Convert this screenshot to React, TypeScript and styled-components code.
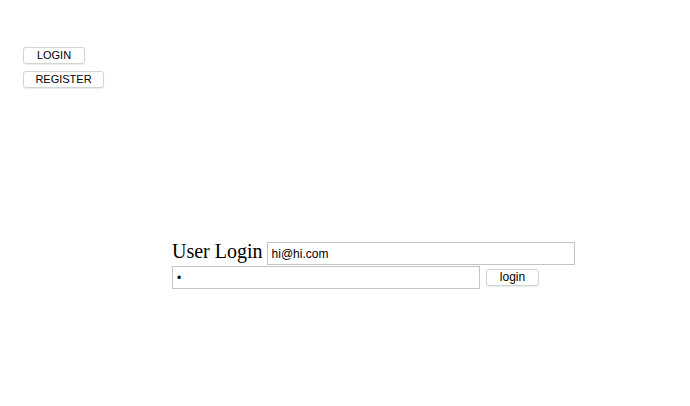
import React from "react";
import styled, { createGlobalStyle } from "styled-components";

const Global = createGlobalStyle`
  html, body { margin: 0; padding: 0; background: #fff; }
  body { font-family: "Liberation Serif", serif; }
`;

const Page = styled.div`
  width: 690px;
  height: 406px;
  display: flex;
  flex-direction: column;
`;

const Nav = styled.nav`
  display: flex;
  flex-direction: column;
  align-items: flex-start;
  gap: 7px;
  padding: 47px 0 0 23px;
`;

const NavButton = styled.button<{ $w: number }>`
  width: ${(p) => p.$w}px;
  height: 17px;
  padding: 0;
  background: #fff;
  border: 1px solid #d4d4d4;
  border-radius: 3px;
  font-family: "Liberation Sans", Arial, sans-serif;
  font-size: 11px;
  color: #000;
  line-height: 15px;
  box-shadow: 0 1px 1px rgba(0, 0, 0, 0.08);
`;

const Form = styled.form`
  margin: 154px 0 0 172px;
  display: flex;
  flex-direction: column;
  align-items: flex-start;
  gap: 1px;
`;

const Row = styled.div<{ $gap: number }>`
  display: flex;
  align-items: center;
  gap: ${(p) => p.$gap}px;
`;

const Title = styled.span`
  font-family: "Liberation Serif", "Times New Roman", serif;
  font-size: 20px;
  color: #000;
  line-height: 23px;
  position: relative;
  top: -2px;
`;

const Input = styled.input`
  box-sizing: border-box;
  width: 308px;
  height: 23px;
  margin: 0;
  padding: 0 4px;
  border: 1px solid #c4c4c4;
  font-family: "Liberation Sans", Arial, sans-serif;
  font-size: 12px;
  color: #000;
  outline: none;
`;

const SubmitButton = styled.button`
  width: 53px;
  height: 17px;
  padding: 0;
  background: #fff;
  border: 1px solid #d4d4d4;
  border-radius: 3px;
  font-family: "Liberation Sans", Arial, sans-serif;
  font-size: 12px;
  color: #000;
  line-height: 15px;
  box-shadow: 0 1px 1px rgba(0, 0, 0, 0.08);
`;

export default function App() {
  return (
    <Page>
      <Global />
      <Nav>
        <NavButton $w={62}>LOGIN</NavButton>
        <NavButton $w={81}>REGISTER</NavButton>
      </Nav>
      <Form onSubmit={(e) => e.preventDefault()}>
        <Row $gap={4}>
          <Title>User Login</Title>
          <Input type="text" defaultValue="hi@hi.com" />
        </Row>
        <Row $gap={6}>
          <Input type="password" defaultValue="a" />
          <SubmitButton type="submit">login</SubmitButton>
        </Row>
      </Form>
    </Page>
  );
}
